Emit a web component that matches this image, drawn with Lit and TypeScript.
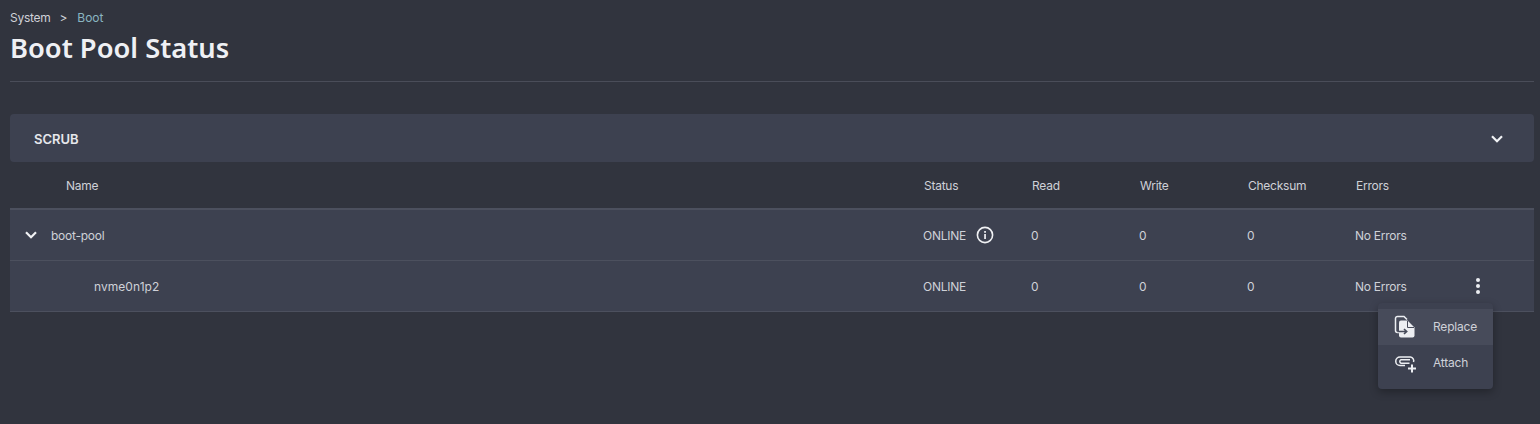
import { LitElement, html, css } from "lit";
import { customElement } from "lit/decorators.js";

const chevron = html`<svg class="chev" viewBox="0 0 14 10" width="14" height="10"><path d="M2 2.2 7 7.2 12 2.2" fill="none" stroke="currentColor" stroke-width="2.2"/></svg>`;

@customElement("app-root")
export class AppRoot extends LitElement {
  static styles = css`
    :host { display: block; position: relative; width: 1540px; height: 424px; overflow: hidden; background: #31343e; color: #dfe0e6; font-family: "Noto Sans", "Open Sans", sans-serif; box-sizing: border-box; padding: 0 6px 0 10px; }
    .crumbs { display: flex; padding-top: 10px; font-size: 12px; line-height: 16px; color: #cfd1d8; font-family: "Inter", sans-serif; letter-spacing: -0.25px; }
    .crumbs .sep { margin: 0 10px 0 9px; }
    .crumbs .cur { color: #8ab5c2; letter-spacing: 0; }
    h1 { margin: 2px 0 0; font-size: 27.3px; line-height: 40px; font-weight: 600; color: #eff0f4; }
    .rule { height: 1px; margin-top: 13px; background: #4a4d59; }
    .panel { margin-top: 32px; height: 48px; border-radius: 4px; background: #3d4150; display: flex; align-items: center; justify-content: space-between; padding: 2px 30px 0 24px; box-sizing: border-box; font-size: 13px; font-weight: 600; color: #e6e7ec; font-family: "Inter", sans-serif; }
    .chev { display: block; color: #f1f2f5; }
    .row { display: grid; grid-template-columns: 914px 108px 108px 108px 108px 108px 70px; align-items: center; font-size: 12px; font-family: "Inter", sans-serif; letter-spacing: -0.25px; }
    .head { height: 46px; color: #cfd1d8; }
    .head .name { padding-left: 56px; }
    .body { height: 50px; background: #3d4150; color: #cfd1d8; border-bottom: 1px solid #4c505e; }
    .first { border-top: 2px solid #4c505e; }
    .body > div { margin-left: -1px; }
    .name { display: flex; align-items: center; font-size: 12px; }
    .first .name { padding-left: 15px; gap: 13px; }
    .child .name { padding-left: 85px; letter-spacing: 0.05px; }
    .status { display: flex; align-items: center; gap: 9px; }
    .info { display: block; color: #f0f1f4; margin-left: 1px; }
    .dots { display: flex; justify-content: flex-end; padding-right: 54px; }
    .menu { position: absolute; left: 1378px; top: 303px; width: 115px; height: 86px; box-sizing: border-box; padding: 6px 0 8px; border-radius: 4px; background: #3d4150; box-shadow: 0 3px 8px rgba(0,0,0,.3); font-family: "Inter", sans-serif; font-size: 12px; letter-spacing: -0.2px; color: #cfd1d8; }
    .item { height: 36px; display: flex; align-items: center; gap: 17px; padding-left: 16px; }
    .item + .item { gap: 15px; }
    .item span { padding-bottom: 1px; }
    .item.hover { background: #474b5a; }
    .item svg { display: block; color: #eceef2; }
  `;

  render() {
    return html`
      <div class="crumbs"><span>System</span><span class="sep">&gt;</span><span class="cur">Boot</span></div>
      <h1>Boot Pool Status</h1>
      <div class="rule"></div>
      <div class="panel"><span>SCRUB</span>${chevron}</div>
      <div class="row head">
        <div class="name">Name</div><div>Status</div><div>Read</div><div>Write</div><div>Checksum</div><div>Errors</div><div></div>
      </div>
      <div class="row body first">
        <div class="name">${chevron}<span>boot-pool</span></div>
        <div class="status"><span>ONLINE</span>
          <svg class="info" width="18" height="18" viewBox="0 0 18 18"><circle cx="9" cy="9" r="7.6" fill="none" stroke="currentColor" stroke-width="1.6"/><rect x="8.2" y="8" width="1.7" height="5" fill="currentColor"/><rect x="8.2" y="5" width="1.7" height="1.8" fill="currentColor"/></svg>
        </div>
        <div>0</div><div>0</div><div>0</div><div>No Errors</div><div></div>
      </div>
      <div class="row body child">
        <div class="name">nvme0n1p2</div>
        <div>ONLINE</div><div>0</div><div>0</div><div>0</div><div>No Errors</div>
        <div class="dots"><svg width="4" height="16" viewBox="0 0 4 16"><g fill="#eceef2"><circle cx="2" cy="2" r="2"/><circle cx="2" cy="8" r="2"/><circle cx="2" cy="14" r="2"/></g></svg></div>
      </div>
      <div class="menu">
        <div class="item hover">
          <svg width="22" height="24" viewBox="0 0 22 24"><path d="M5 17.5H3.5A2 2 0 0 1 1.5 15.5V3.5A2 2 0 0 1 3.5 1.5H10L13 4.5" fill="none" stroke="currentColor" stroke-width="1.5"/><path d="M5 7.5A2 2 0 0 1 7 5.5H13.5L20.5 12.5V20.5A2 2 0 0 1 18.5 22.5H7A2 2 0 0 1 5 20.5Z" fill="currentColor"/><path d="M13.5 6V12.5H20" fill="none" stroke="#474b5a" stroke-width="1"/><path d="M3.5 16.5H12.5M10 14l2.7 2.5-2.7 2.5" fill="none" stroke="#474b5a" stroke-width="1.6"/></svg>
          <span>Replace</span>
        </div>
        <div class="item">
          <svg width="24" height="20" viewBox="-1 -2 24 20"><path d="M10 10.5H5A3.8 3.8 0 0 1 5 2H15.5A3.7 3.7 0 0 1 18.5 7M14.5 8.2H6A1.8 1.8 0 0 1 6 4.8H15" fill="none" stroke="currentColor" stroke-width="1.5"/><path d="M17 9.5V17.5M13 13.5H21" stroke="currentColor" stroke-width="2"/></svg>
          <span>Attach</span>
        </div>
      </div>
    `;
  }
}
